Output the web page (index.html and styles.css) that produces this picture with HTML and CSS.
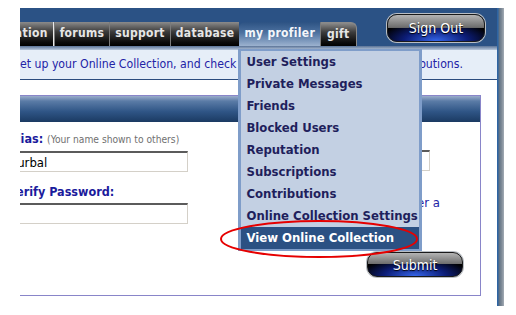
FILE: index.html
```html
<!DOCTYPE html>
<html lang="en">
<head>
    <meta charset="UTF-8">
    <title>My Profiler - Account</title>
    <link rel="stylesheet" href="styles.css">
</head>
<body>
    <div class="frame">
        <div class="site">
            <div class="main">
                <div class="header">
                    <ul class="tabs">
                        <li class="tab seen">information</li>
                        <li class="tab">forums</li>
                        <li class="tab">support</li>
                        <li class="tab">database</li>
                        <li class="tab active">my profiler
                            <ul class="menu">
                                <li>User Settings</li>
                                <li>Private Messages</li>
                                <li>Friends</li>
                                <li>Blocked Users</li>
                                <li>Reputation</li>
                                <li>Subscriptions</li>
                                <li>Contributions</li>
                                <li>Online Collection Settings</li>
                                <li class="current">View Online Collection</li>
                                <svg class="ring" width="200" height="40" viewBox="0 0 200 40">
                                    <ellipse cx="100" cy="20" rx="98" ry="18" fill="none" stroke="#e60000" stroke-width="2"/>
                                </svg>
                            </ul>
                        </li>
                        <li class="tab last">gift</li>
                    </ul>
                    <button class="gloss signout">Sign Out</button>
                </div>
                <div class="header-rule"></div>
                <div class="infobar">
                    <span class="lead">Set up your Online Collection, and check</span>
                    <span>out your latest contributions.</span>
                </div>

                <div class="panel">
                    <div class="panel-head"></div>
                    <div class="panel-body">
                        <div class="fields">
                            <div class="field">
                                <label>Alias: <span class="hint">(Your name shown to others)</span></label>
                                <input type="text" value="Turbal">
                            </div>
                            <div class="field">
                                <label>Password:</label>
                                <input type="password">
                            </div>
                            <div class="field">
                                <label>Verify Password:</label>
                                <input type="password">
                            </div>
                            <div class="field">
                                <p class="note">Pick one you'll remember a<br>year from now.</p>
                            </div>
                        </div>
                        <div class="actions">
                            <button class="gloss submit">Submit</button>
                        </div>
                    </div>
                </div>
            </div>
            <div class="edge"></div>
        </div>
    </div>
</body>
</html>
```

FILE: styles.css
```css
body {
    margin: 8px 0 0 20px;
    background: #fff;
    font-family: "DejaVu Sans Condensed", "DejaVu Sans", sans-serif;
    font-stretch: condensed;
}
.frame {
    width: 484px;
    overflow: hidden;
}
.site {
    display: flex;
    width: 544px;
    margin-left: -60px;
}
.main {
    width: 537px;
    padding-bottom: 10px;
}
.edge {
    width: 7px;
    background: linear-gradient(to right, #2e64a2 0, #2e64a2 15%, #5f7184 30%, #7d8996 65%, #a4acb5);
}

/* top bar */
.header {
    display: flex;
    align-items: flex-end;
    height: 38px;
    background: #2b5285;
}
.tabs {
    display: flex;
    list-style: none;
    margin: 0;
    padding: 0 0 0 7px;
}
.tab {
    position: relative;
    height: 22px;
    line-height: 22px;
    padding: 0 5px 2px;
    border-left: 1px solid #7a7a7a;
    background: linear-gradient(#8b8b8b, #3c3c3c 40%, #0b0b0b 85%, #000);
    color: #e6e6e6;
    font-size: 12px;
    font-weight: bold;
    letter-spacing: 0.3px;
    white-space: nowrap;
}
.tab.seen {
    border-right: 1px solid #e8e8e8;
}
.tab.active {
    border-left: none;
    border-radius: 6px 0 0 0;
    background: linear-gradient(#2c5283, #4e72a0 45%, #9cb2cf);
    color: #f4f6fa;
}
.tab.last {
    border-radius: 0 6px 0 0;
    border-top: 1px solid #8a8a8a;
    border-right: 1px solid #8a8a8a;
    height: 21px;
    padding: 0 6px 2px;
}
.header-rule {
    height: 4px;
    background: linear-gradient(#5a7397, #b9c9dd);
}

/* glossy buttons */
.gloss {
    font-family: "DejaVu Sans Condensed", "DejaVu Sans", sans-serif;
    font-stretch: condensed;
    color: #fff;
    font-size: 14px;
    border: 1px solid #1a1a1a;
    border-radius: 10px;
    box-shadow: 0 0 0 1px #b9bec4;
    text-shadow: 0 1px 1px #000;
    background:
        linear-gradient(#b4b4b4, #6c6c6c 48%, transparent 50%),
        radial-gradient(ellipse 60% 80% at 50% 100%, #3566ea, #0c1d78 55%, #000 100%);
    cursor: pointer;
}
.signout {
    align-self: flex-start;
    width: 98px;
    height: 28px;
    margin: 6px 12px 0 auto;
}

/* drop menu */
.menu {
    position: absolute;
    left: -1px;
    top: 27px;
    width: 178px;
    margin: 0;
    padding: 0;
    list-style: none;
    border: 3px solid #7f9dc9;
    border-top-width: 2px;
    border-bottom-width: 2px;
    background: #c3d0e3;
    letter-spacing: 0;
    z-index: 10;
}
.menu li {
    height: 22px;
    line-height: 22px;
    padding-left: 5px;
    color: #1f1f5c;
    font-size: 13px;
    font-weight: bold;
}
.menu li.current {
    background: #2b5183;
    color: #fff;
}
.ring {
    position: absolute;
    left: -22px;
    top: 168px;
}

/* info line */
.infobar {
    display: flex;
    justify-content: space-between;
    height: 29px;
    line-height: 29px;
    padding: 0 34px 0 53px;
    background: #e6eef8;
    border-bottom: 1px solid #2b4c7e;
    color: #2323a6;
    font-size: 12.2px;
    white-space: nowrap;
}

/* form panel */
.panel {
    margin: 15px 16px 0 0;
    border: 1px solid #8985c9;
}
.panel-head {
    height: 26px;
    background: linear-gradient(#9aaccb, #5a7ba6 20%, #2f5586 60%, #1b3a62);
}
.panel-body {
    padding: 9px 17px 18px 47px;
}
.fields {
    display: grid;
    grid-template-columns: 181px 190px;
    column-gap: 61px;
    row-gap: 12px;
}
.field label {
    display: block;
    line-height: 16px;
    margin-bottom: 3px;
    color: #1b1b9c;
    font-size: 12.5px;
    font-weight: bold;
    white-space: nowrap;
}
.hint {
    color: #707070;
    font-size: 10.2px;
    font-weight: normal;
}
.field input {
    box-sizing: border-box;
    width: 180px;
    height: 21px;
    padding: 0 2px;
    border-top: 2px solid #5b5b5b;
    border-left: 2px solid #5b5b5b;
    border-right: 1px solid #d4d0c8;
    border-bottom: 1px solid #d4d0c8;
    font-family: "DejaVu Sans Condensed", "DejaVu Sans", sans-serif;
    font-stretch: condensed;
    font-size: 13px;
}
.field:nth-child(4) {
    justify-self: end;
}
.note {
    margin: 11px 0 0;
    line-height: 16px;
    color: #2323a6;
    font-size: 13px;
}
.actions {
    display: flex;
    justify-content: flex-end;
    margin-top: 25px;
}
.submit {
    width: 96px;
    height: 25px;
}
```
